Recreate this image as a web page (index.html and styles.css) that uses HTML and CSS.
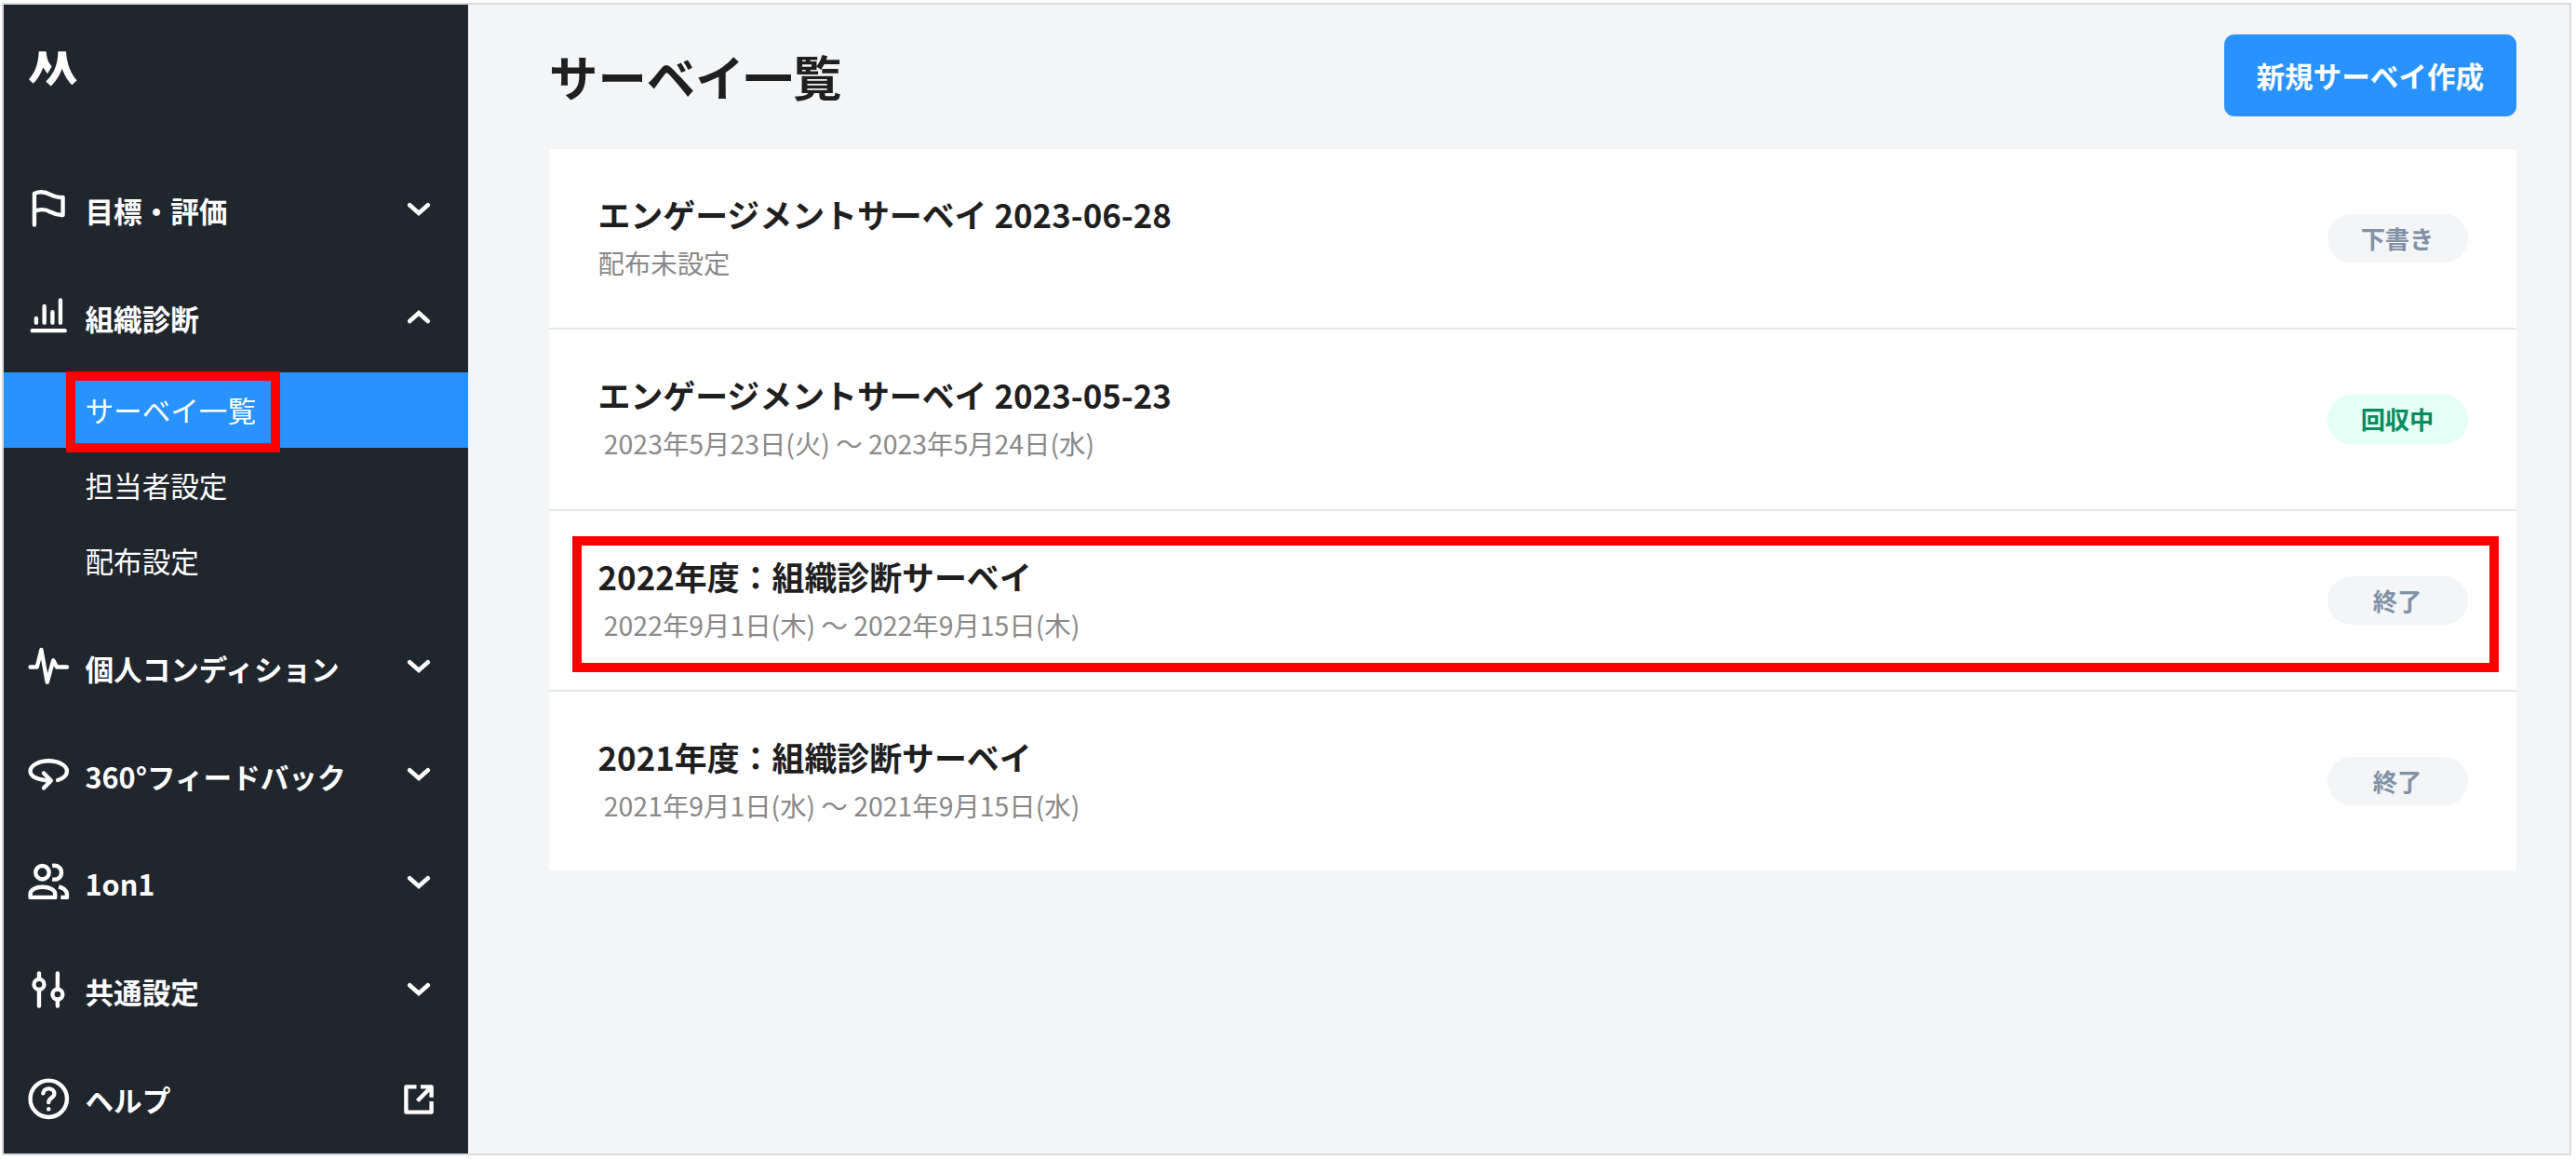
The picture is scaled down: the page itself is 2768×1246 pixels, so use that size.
FILE: index.html
```
<!DOCTYPE html>
<html lang="ja">
<head>
<meta charset="UTF-8" />
<meta name="viewport" content="width=device-width, initial-scale=1" />
<title>サーベイ一覧</title>
<link rel="stylesheet" href="styles.css">
</head>
<body>
    <div class="frame">
        <nav class="sidebar">
            <div class="brand">
                <svg class="logo" viewBox="90 160 162 122">
                    <path d="M125 166H149C150 190 158 205 167 214L153 238L139 218C130 240 120 258 107 270L93 256C110 238 124 210 125 166Z"/>
                    <path d="M187 166H213C215 205 228 238 248 259L232 274C218 262 207 240 200 222C192 245 178 265 164 278L148 263C172 240 187 210 187 166Z"/>
                </svg>
            </div>

            <a class="nav-item">
                <svg class="icon" viewBox="0 0 24 24"><path d="M5 19V3.6C8 2.2 10.5 2.8 13 4.2C15 5.3 17 5.6 19 5.5V14.2C17 14.3 15 13.8 13 12.7C10.5 11.2 8 11 5 12.3"/></svg>
                <span class="label">目標・評価</span>
                <svg class="chevron" viewBox="0 0 32 16"><path d="M6.2 3.2L16 12L25.8 3.2"/></svg>
            </a>

            <a class="nav-item">
                <svg class="icon" viewBox="0 0 24 24"><path d="M4 17.9H20M5.9 11.9V14M9.9 5.9V14M13.9 8.8V14M17.8 2.9V14"/></svg>
                <span class="label">組織診断</span>
                <svg class="chevron" viewBox="0 0 32 16"><path d="M6.2 12L16 3.2L25.8 12"/></svg>
            </a>
            <div class="sub-menu">
                <a class="sub-item active">サーベイ一覧<span class="mark mark-menu"></span></a>
                <a class="sub-item">担当者設定</a>
                <a class="sub-item">配布設定</a>
            </div>

            <a class="nav-item">
                <svg class="icon" viewBox="0 0 24 24"><path d="M3 11.2H6.3L8.4 2.7L11.3 18.7L14.3 7.9L16 11.2H21"/></svg>
                <span class="label">個人コンディション</span>
                <svg class="chevron" viewBox="0 0 32 16"><path d="M6.2 3.2L16 12L25.8 3.2"/></svg>
            </a>

            <a class="nav-item">
                <svg class="icon" viewBox="0 0 24 24"><path d="M16.5 14.2C19 13.3 21 11.8 21 9.8C21 7 17 4.7 12 4.7S3 7 3 9.8C3 12.3 6.5 14.1 12.5 14.4M9.6 10.7L13.2 14.4L9.6 18"/></svg>
                <span class="label">360°フィードバック</span>
                <svg class="chevron" viewBox="0 0 32 16"><path d="M6.2 3.2L16 12L25.8 3.2"/></svg>
            </a>

            <a class="nav-item">
                <svg class="icon flat" viewBox="0 0 24 24"><circle cx="8.9" cy="6.5" r="3.3"/><path d="M3 18.7V17C3 15 5.5 13.6 9 13.6S15.2 15 15.2 17V18.7ZM13.8 3.2C16.6 2.7 18.3 4.4 18.3 6.5S16.6 10.3 13.8 9.8M17 13.4C19.5 14.2 21 15.4 21 17V18.7H18"/></svg>
                <span class="label">1on1</span>
                <svg class="chevron" viewBox="0 0 32 16"><path d="M6.2 3.2L16 12L25.8 3.2"/></svg>
            </a>

            <a class="nav-item">
                <svg class="icon" viewBox="0 0 24 24"><circle cx="7.3" cy="8.4" r="2.5"/><circle cx="16.4" cy="13.3" r="2.5"/><path d="M7.3 2.9V5.9M7.3 10.9V19M16.4 2.9V10.8M16.4 15.8V19"/></svg>
                <span class="label">共通設定</span>
                <svg class="chevron" viewBox="0 0 32 16"><path d="M6.2 3.2L16 12L25.8 3.2"/></svg>
            </a>

            <a class="nav-item">
                <svg class="icon" viewBox="0 0 24 24"><circle cx="12" cy="12" r="9"/><path d="M9.3 9.3C9.6 7.9 10.6 7 12 7C13.6 7 14.8 8 14.8 9.5C14.8 11.5 12 11.6 12 13.7M12 17V17.1"/></svg>
                <span class="label">ヘルプ</span>
                <svg class="external" viewBox="0 0 32 32"><path d="M13.5 2.4H2.4V29.6H29.6V18M18 2.4H29.6V13.7M14.5 17.5L28.5 3.5"/></svg>
            </a>
        </nav>

        <main class="main">
            <header class="page-header">
                <h1>サーベイ一覧</h1>
                <button class="create-btn">新規サーベイ作成</button>
            </header>

            <div class="survey-list">
                <div class="survey">
                    <div class="survey-info">
                        <h2>エンゲージメントサーベイ 2023-06-28</h2>
                        <p>配布未設定</p>
                    </div>
                    <span class="badge">下書き</span>
                </div>
                <div class="survey">
                    <div class="survey-info">
                        <h2>エンゲージメントサーベイ 2023-05-23</h2>
                        <p>&nbsp;2023年5月23日(火) 〜 2023年5月24日(水)</p>
                    </div>
                    <span class="badge collecting">回収中</span>
                </div>
                <div class="survey">
                    <div class="survey-info">
                        <h2>2022年度：組織診断サーベイ</h2>
                        <p>&nbsp;2022年9月1日(木) 〜 2022年9月15日(木)</p>
                    </div>
                    <span class="badge">終了</span>
                    <span class="mark mark-survey"></span>
                </div>
                <div class="survey">
                    <div class="survey-info">
                        <h2>2021年度：組織診断サーベイ</h2>
                        <p>&nbsp;2021年9月1日(水) 〜 2021年9月15日(水)</p>
                    </div>
                    <span class="badge">終了</span>
                </div>
            </div>
        </main>
    </div>
</body>
</html>
```

FILE: styles.css
```
:root {
    --sidebar-color: #20262e;
    --primary-color: #2893ff;
    --background-color: #f3f5f7;
    --text-color: #1f1f1f;
    --mark-color: #ff0000;
}

* {
    box-sizing: border-box;
}

body {
    margin: 0;
    background: #fff;
    color: var(--text-color);
    font-family: "Noto Sans CJK JP", sans-serif;
    overflow: hidden;
}

h1, h2, p {
    margin: 0;
}

.frame {
    display: flex;
    width: 2761px;
    height: 1238px;
    margin: 3px 0 0 2px;
    border: 2px solid #d9dadb;
    background: var(--background-color);
}

/* sidebar */
.sidebar {
    flex: none;
    width: 498.5px;
    overflow: hidden;
    background: var(--sidebar-color);
    color: #fff;
    font-size: 30.6px;
}

.brand {
    height: 163.6px;
    padding: 48px 0 0 26px;
}

.logo {
    display: block;
    width: 54px;
    height: 41px;
    fill: #fff;
}

.nav-item {
    display: flex;
    align-items: center;
    height: 115.7px;
    padding: 0 36.5px 0 22px;
    font-weight: 700;
}

.label {
    flex: 1;
    margin-left: 13px;
    white-space: nowrap;
}

.icon, .chevron, .external {
    flex: none;
    fill: none;
    stroke: #fff;
}

.icon {
    width: 52.5px;
    height: 52.5px;
    stroke-width: 2;
    stroke-linecap: round;
    stroke-linejoin: round;
}

.icon.flat {
    stroke-linecap: butt;
}

.chevron {
    width: 32px;
    height: 16px;
    margin-bottom: 3px;
    stroke-width: 4.6;
    stroke-linecap: round;
}

.external {
    width: 32px;
    height: 32px;
    stroke-width: 4.4;
    stroke-linejoin: round;
}

.sub-menu {
    padding-bottom: 17px;
}

.sub-item {
    position: relative;
    display: flex;
    align-items: center;
    height: 81px;
    padding-left: 87.5px;
}

.sub-item.active {
    background: var(--primary-color);
}

/* red highlight boxes */
.mark {
    position: absolute;
    border: 10px solid var(--mark-color);
}

.mark-menu {
    top: -1px;
    left: 67px;
    width: 230px;
    height: 87px;
    z-index: 1;
}

.mark-survey {
    top: 27px;
    left: 25px;
    right: 19px;
    height: 146px;
}

/* content */
.main {
    flex: 1;
    padding: 32px 57px 0 87.5px;
}

.page-header {
    display: flex;
    justify-content: space-between;
    align-items: center;
    height: 87.5px;
    margin-bottom: 35px;
}

h1 {
    font-size: 52.4px;
    line-height: 1;
}

.create-btn {
    width: 314.5px;
    height: 87.5px;
    padding: 0;
    border: none;
    border-radius: 11px;
    background: var(--primary-color);
    color: #fff;
    font-family: inherit;
    font-size: 30.6px;
    font-weight: 700;
}

.survey-list {
    background: #fff;
}

.survey {
    position: relative;
    display: flex;
    justify-content: space-between;
    align-items: center;
    height: 194.5px;
    padding: 0 52.5px;
    border-bottom: 2px solid #e2e7eb;
}

.survey:last-child {
    height: 192px;
    border-bottom: none;
}

h2 {
    font-size: 34.9px;
    line-height: 52px;
}

p {
    color: #888;
    font-size: 28.4px;
    line-height: 52px;
}

.badge {
    width: 151px;
    height: 52.5px;
    border-radius: 27px;
    background: #f3f5f7;
    color: #8091a7;
    font-size: 26.25px;
    font-weight: 700;
    line-height: 52.5px;
    text-align: center;
}

.badge.collecting {
    background: #e3fff6;
    color: #078c5d;
}
```
